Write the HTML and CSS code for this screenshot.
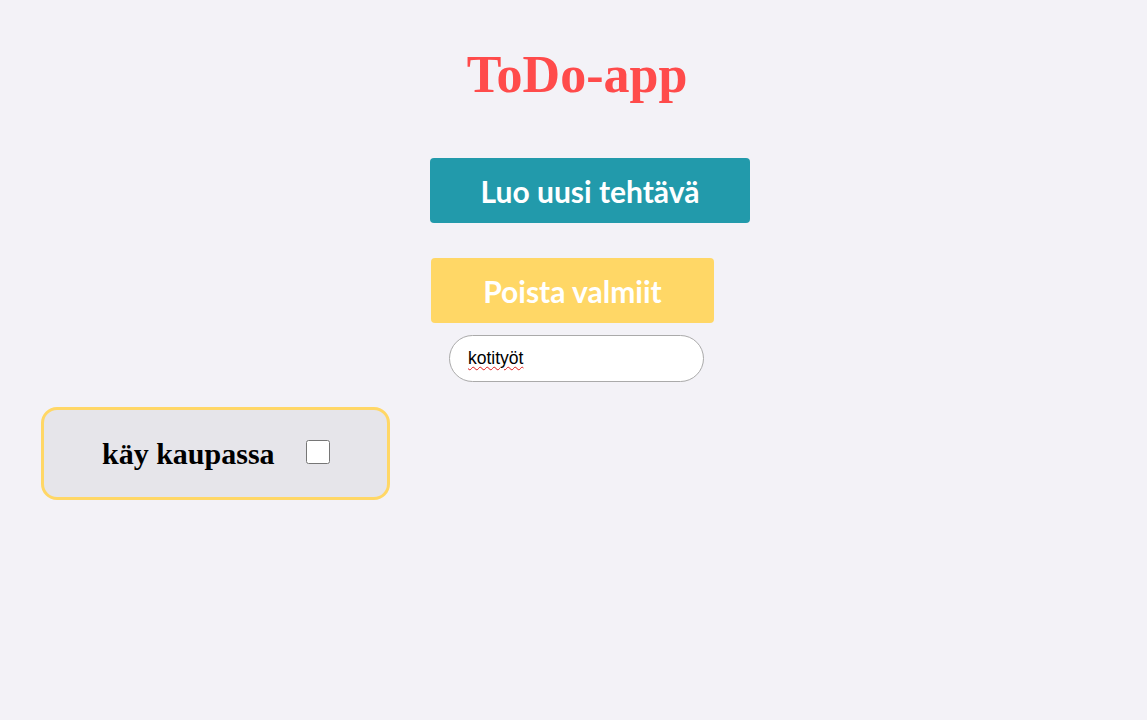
FILE: index.html
```html
<!DOCTYPE html>
<html lang="fi">
<head>
<meta charset="utf-8">
<title>ToDo-app</title>
<link rel="stylesheet" href="styles.css">
</head>
<body>
<header class="header">
  <h1 class="title">ToDo-app</h1>
</header>
<main class="controls">
  <button class="btn btn-create">Luo uusi tehtävä</button>
  <button class="btn btn-clear">Poista valmiit</button>
  <div class="filter-wrap">
    <input class="filter" type="text" value="kotityöt">
    <span class="spell" aria-hidden="true">kotityöt</span>
  </div>
</main>
<section class="list">
  <div class="card">
    <span class="card-text">käy kaupassa</span>
    <input class="card-check" type="checkbox">
  </div>
</section>
</body>
</html>
```

FILE: styles.css
```css
html, body {
  margin: 0;
  padding: 0;
}
body {
  background: #f3f2f7;
  font-family: "Liberation Serif", serif;
  min-height: 720px;
}
.header {
  display: flex;
  justify-content: center;
  padding-top: 40px;
  padding-left: 7px;
}
.title {
  margin: 0;
  font-family: "Liberation Serif", serif;
  font-weight: bold;
  font-size: 52px;
  line-height: 70px;
  color: #ff4b4b;
}
.controls {
  display: flex;
  flex-direction: column;
  align-items: flex-start;
  padding-left: 430px;
  margin-top: 48px;
}
.btn {
  border: none;
  border-radius: 4px;
  font-family: Lato, "Noto Sans", sans-serif;
  font-weight: bold;
  font-size: 30px;
  color: #ffffff;
  height: 65px;
  padding: 0;
  cursor: pointer;
}
.btn-create {
  width: 320px;
  background: #229aab;
}
.btn-clear {
  width: 283px;
  margin-left: 1px;
  margin-top: 35px;
  background: #ffd766;
}
.filter-wrap {
  position: relative;
  margin-top: 12px;
  margin-left: 19px;
}
.filter {
  display: block;
  width: 255px;
  height: 47px;
  box-sizing: border-box;
  border: 1px solid #aaaaaa;
  border-radius: 24px;
  background: #ffffff;
  padding: 0 0 0 18px;
  margin: 0;
  font-family: "Liberation Sans", Arial, sans-serif;
  font-size: 17.5px;
  color: #000000;
}
.spell {
  position: absolute;
  left: 19px;
  top: 12px;
  font-family: "Liberation Sans", Arial, sans-serif;
  font-size: 17.5px;
  line-height: 20px;
  color: transparent;
  pointer-events: none;
  text-decoration: underline wavy #e01b1b;
  text-decoration-thickness: 1px;
  text-underline-offset: 3px;
}
.list {
  padding-left: 41px;
  margin-top: 25px;
}
.card {
  width: 349px;
  height: 93px;
  box-sizing: border-box;
  border: 3px solid #ffd766;
  border-radius: 16px;
  background: #e6e5ea;
  display: flex;
  align-items: center;
  padding-left: 58px;
  padding-top: 0;
}
.card-text {
  font-family: "Liberation Serif", serif;
  font-weight: bold;
  font-size: 30px;
  color: #000000;
}
.card-check {
  width: 24px;
  height: 24px;
  margin: -4px 0 0 31px;
}
```
